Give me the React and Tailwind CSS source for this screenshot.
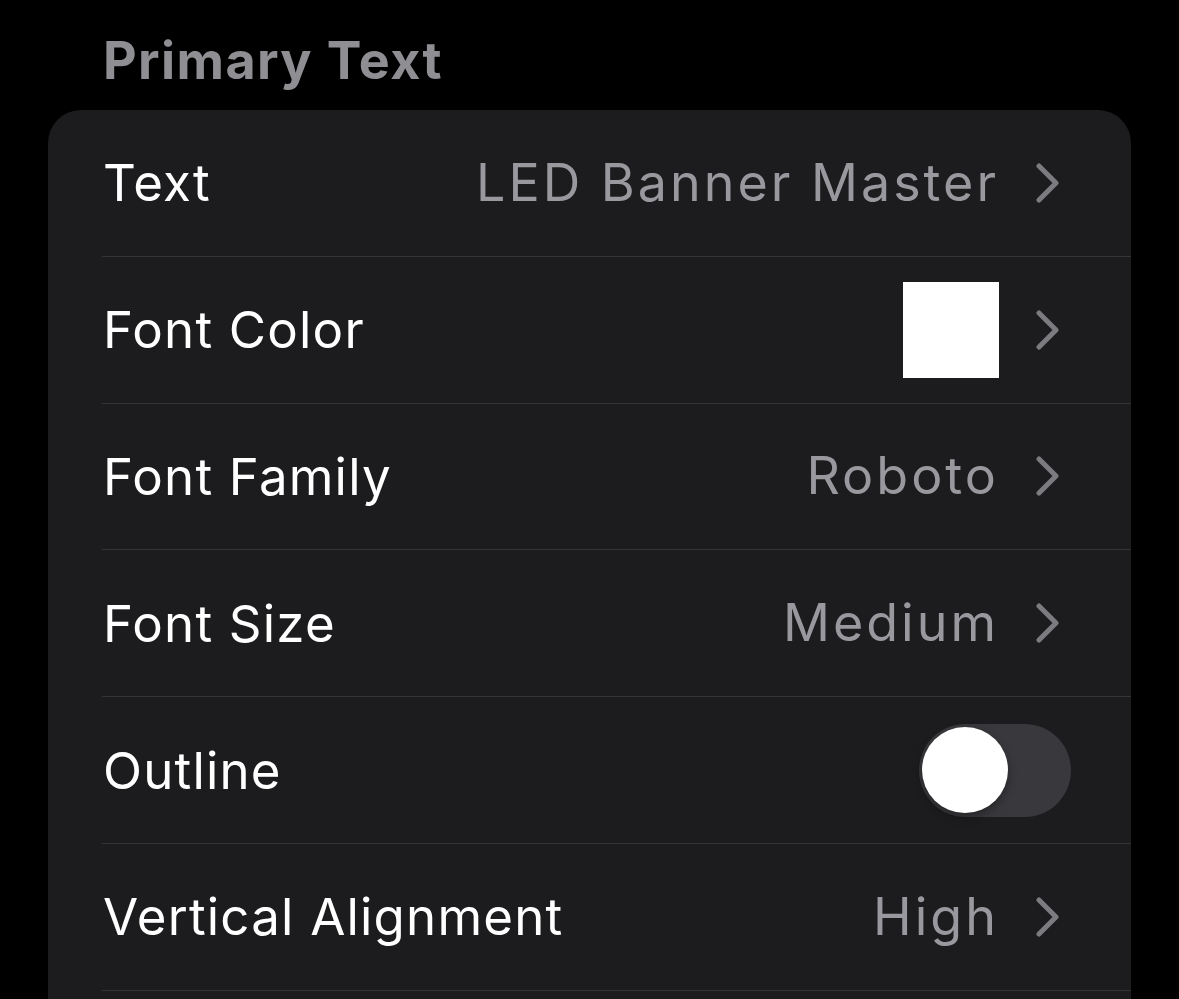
import React from "react";

const FONT = { fontFamily: 'Inter, "Noto Sans", "Liberation Sans", sans-serif' };

function Chevron() {
  return (
    <svg width="36" height="40" viewBox="0 0 36 40" className="shrink-0">
      <polyline
        points="4,3 21,20 4,37"
        fill="none"
        stroke="#7c7c80"
        strokeWidth="5"
        strokeLinecap="round"
        strokeLinejoin="round"
      />
    </svg>
  );
}

function Row({ label, children }) {
  return (
    <div className="flex flex-col">
      <div className="flex h-[145.8px] items-center justify-between pl-[55px] pr-[60px]">
        <span className="text-[51px] leading-none tracking-[1.2px] text-white">{label}</span>
        <div className="flex items-center">{children}</div>
      </div>
      <div className="ml-[54px] h-px bg-[#343437]" />
    </div>
  );
}

function Value({ text }) {
  return (
    <>
      <span className="mr-[36px] text-[52px] leading-none tracking-[3px] text-[#98989e]">{text}</span>
      <Chevron />
    </>
  );
}

export default function App() {
  return (
    <div className="h-[999px] w-[1179px] overflow-hidden bg-black" style={FONT}>
      <div className="flex h-[110px] items-start pl-[103px] pt-[35px]">
        <span className="text-[52px] font-bold leading-none tracking-[1.4px] text-[#8e8e93]">Primary Text</span>
      </div>
      <div className="ml-[48px] w-[1083px] rounded-t-[33px] bg-[#1c1c1e]">
        <Row label="Text">
          <Value text="LED Banner Master" />
        </Row>
        <Row label="Font Color">
          <div className="mr-[36px] h-[96px] w-[96px] bg-white" />
          <Chevron />
        </Row>
        <Row label="Font Family">
          <Value text="Roboto" />
        </Row>
        <Row label="Font Size">
          <Value text="Medium" />
        </Row>
        <Row label="Outline">
          <div className="flex h-[93px] w-[152px] items-center rounded-full bg-[#39393d] pl-[3px]">
            <div className="h-[86px] w-[86px] rounded-full bg-white shadow-[0_4px_10px_rgba(0,0,0,0.35)]" />
          </div>
        </Row>
        <Row label="Vertical Alignment">
          <Value text="High" />
        </Row>
        <div className="h-[40px]" />
      </div>
    </div>
  );
}
